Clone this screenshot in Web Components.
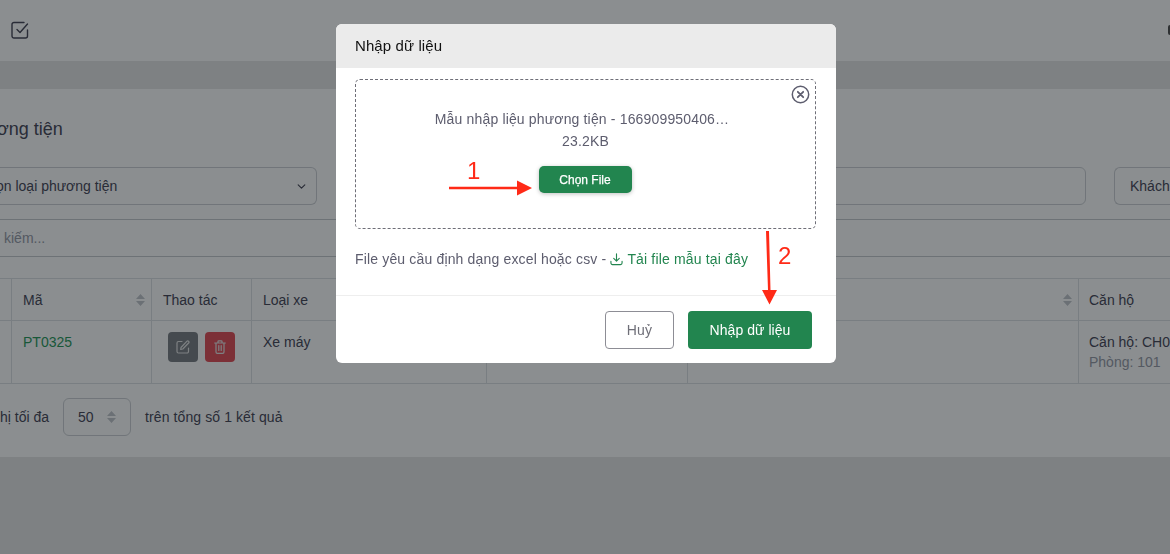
<!DOCTYPE html>
<html lang="vi">
<head>
<meta charset="utf-8">
<title>Nhập dữ liệu</title>
<style>
  html, body { margin: 0; height: 100%; overflow: hidden; }
  body { font-family: "Liberation Sans", Arial, sans-serif; color: #4c4c5c; background: #e8e8e8; }
</style>
</head>
<body>
<vehicle-page></vehicle-page>
<import-modal></import-modal>
<step-arrows></step-arrows>

<script>
(() => {
  const icons = {
    chevron: '<svg width="9" height="5" viewBox="0 0 10 6" fill="none" stroke="currentColor" stroke-width="1.4" stroke-linecap="round" stroke-linejoin="round"><path d="M1 1l4 4 4-4"/></svg>',
    sort: '<svg width="9" height="12" viewBox="0 0 9 12" fill="#c4c8cd"><path d="M4.5 0L9 5H0zM0 7h9l-4.5 5z"/></svg>',
    check: '<svg width="18" height="18" viewBox="0 0 18 18" fill="none" stroke="currentColor" stroke-width="1.4" stroke-linecap="round" stroke-linejoin="round"><path d="M16.5 9v6a2 2 0 0 1-2 2H3a2 2 0 0 1-2-2V3.500a2 2 0 0 1 2-2h10"/><path d="M6 8.500l3 3 7.500-8.500"/></svg>',
    edit: '<svg width="14" height="14" viewBox="0 0 14 14" fill="none" stroke="currentColor" stroke-width="1.2" stroke-linecap="round" stroke-linejoin="round"><path d="M12.500 8v3.500a1.500 1.500 0 0 1-1.500 1.500H2.500A1.500 1.500 0 0 1 1 11.500V3a1.500 1.500 0 0 1 1.500-1.500H6"/><path d="M5 7.500L10.800 1.300a1.200 1.200 0 0 1 1.800 1.700L6.800 9 4.700 9.500z"/></svg>',
    trash: '<svg width="12" height="14" viewBox="0 0 12 14" fill="none" stroke="currentColor" stroke-width="1.2" stroke-linecap="round" stroke-linejoin="round"><path d="M.7 3h10.600M4 3V1.500a.7.7 0 0 1 .7-.7h2.600a.7.7 0 0 1 .7.7V3M2 3v9a1.300 1.300 0 0 0 1.300 1.300h5.400A1.300 1.300 0 0 0 10 12V3M4.800 5.500v5M7.200 5.500v5"/></svg>',
    download: '<svg width="13" height="14" viewBox="0 0 14 14" fill="none" stroke="currentColor" stroke-width="1.2" stroke-linecap="round" stroke-linejoin="round"><path d="M7 1.500v7.500M4 6.300L7 9.300l3-3M1 9.500v1.800A1.700 1.700 0 0 0 2.700 13h8.600a1.700 1.700 0 0 0 1.700-1.700V9.500"/></svg>',
    close: '<svg width="19" height="19" viewBox="0 0 19 19" fill="none" stroke="#5d5d6e" stroke-width="1.500" stroke-linecap="round"><circle cx="9.500" cy="9.500" r="8.200"/><path stroke-width="1.800" d="M6.800 6.800l5.400 5.400M12.200 6.800l-5.400 5.400"/></svg>'
  }

  class FilterSelect extends HTMLElement {
    constructor() {
      super()
      this.attachShadow({ mode: 'open' })
      const w = this.getAttribute('chevron') === 'none' ? '' : icons.chevron
      this.shadowRoot.innerHTML = `
        <style>
          :host { display: flex; align-items: center; justify-content: space-between; box-sizing: border-box;
            height: 38px; border: 1px solid #cfd2d6; border-radius: 6px; font-size: 14px; color: #4c4c5c; white-space: nowrap; overflow: hidden; }
          svg { color: #4c4c5c; margin-right: 10px; flex: none; }
        </style>
        <slot></slot>${w}`
    }
  }
  customElements.define('filter-select', FilterSelect)

  class VehicleTable extends HTMLElement {
    constructor() {
      super()
      this.attachShadow({ mode: 'open' })
      this.shadowRoot.innerHTML = `
        <style>
          :host { display: grid; grid-template-columns: 12px 140px 100px 235px 201px 391px 92px; grid-template-rows: 42px 63px;
            border-top: 1px solid #dee2e6; font-size: 14px; color: #4c4c5c; }
          div { box-sizing: border-box; border-right: 1px solid #dee2e6; border-bottom: 1px solid #dee2e6; padding: 0 11px; }
          .head { display: flex; align-items: center; justify-content: space-between; padding-right: 6px; }
          .cell { padding-top: 13px; line-height: 17px; }
          .edge { padding: 0; }
          .last { border-right: 0; white-space: nowrap; overflow: hidden; padding-left: 10px; }
          .code { color: #2f9c5f; }
          .muted { color: #9a9eaa; margin: 3px 0 0; }
          .acts { display: flex; gap: 7px; padding: 11px 16px 0; }
          .btn { width: 30px; height: 30px; border-radius: 4px; display: flex; align-items: center; justify-content: center; color: #e6e6e6; }
          .grey { background: #7f8388; }
          .red { background: #e4545c; }
        </style>
        <div class="edge"></div>
        <div class="head">Mã ${icons.sort}</div>
        <div class="head">Thao tác</div>
        <div class="head">Loại xe</div>
        <div class="head"></div>
        <div class="head"><span></span>${icons.sort}</div>
        <div class="head last">Căn hộ</div>
        <div class="edge"></div>
        <div class="cell code">PT0325</div>
        <div class="acts"><span class="btn grey">${icons.edit}</span><span class="btn red">${icons.trash}</span></div>
        <div class="cell">Xe máy</div>
        <div class="cell"></div>
        <div class="cell"></div>
        <div class="cell last">Căn hộ: CH0<p class="muted">Phòng: 101</p></div>`
    }
  }
  customElements.define('vehicle-table', VehicleTable)

  class VehiclePage extends HTMLElement {
    constructor() {
      super()
      this.attachShadow({ mode: 'open' })
      this.shadowRoot.innerHTML = `
        <style>
          :host { display: block; height: 554px; overflow: hidden; color: #4c4c5c; }
          header { height: 61px; background: #fff; display: flex; align-items: center; justify-content: space-between; padding-left: 11px; }
          header svg { color: #4c4c5c; margin-top: -1px; }
          header i { width: 2px; height: 10px; border-radius: 2px 0 0 2px; background: #555; margin-top: -1px; }
          .card { margin-top: 28px; height: 368px; background: #fff; overflow: hidden; }
          h1 { margin: 0 0 0 -3px; padding-top: 30px; height: 78px; box-sizing: border-box; font-size: 18px; font-weight: 400; line-height: 20px; }
          .filters { display: grid; grid-template-columns: 318px 740px 1fr; column-gap: 28px; height: 53px; box-sizing: border-box; border-bottom: 1px solid #c9ccd0; }
          .filters filter-select:first-child { border-left: 0; border-radius: 0 6px 6px 0; width: 317px; }
          .filters filter-select:last-child { border-right: 0; border-radius: 6px 0 0 6px; padding-left: 15px; }
          .shift { margin-left: -4px; }
          .search { height: 37px; box-sizing: border-box; border-bottom: 1px solid #c9ccd0; display: flex; align-items: center; padding-left: 4px; font-size: 14px; color: #9a9eaa; }
          .gap { height: 21px; }
          .pager { display: flex; align-items: center; height: 38px; margin-top: 14px; font-size: 14px; white-space: nowrap; }
          .pager > span:first-child { width: 49px; flex: none; }
          .pager > span:last-child { letter-spacing: .1px; }
          .pager filter-select { width: 68px; flex: none; margin: 0 14px; padding-left: 14px; }
          .pager svg { margin-right: 14px; }
          .num { display: flex; align-items: center; justify-content: space-between; width: 100%; }
        </style>
        <header>${icons.check}<i></i></header>
        <section class="card">
          <h1>ơng tiện</h1>
          <div class="filters">
            <filter-select><span class="shift">ọn loại phương tiện</span></filter-select>
            <filter-select></filter-select>
            <filter-select chevron="none">Khách</filter-select>
          </div>
          <div class="search">kiếm...</div>
          <div class="gap"></div>
          <vehicle-table></vehicle-table>
          <div class="pager">
            <span>hị tối đa</span>
            <filter-select chevron="none"><span class="num">50 ${icons.sort}</span></filter-select>
            <span>trên tổng số 1 kết quả</span>
          </div>
        </section>`
    }
  }
  customElements.define('vehicle-page', VehiclePage)

  class ImportModal extends HTMLElement {
    constructor() {
      super()
      this.attachShadow({ mode: 'open' })
      this.shadowRoot.innerHTML = `
        <style>
          :host { position: fixed; inset: 0; background: rgba(0, 6, 10, .455); display: block; }
          .dialog { position: absolute; left: 336px; top: 24px; width: 500px; height: 339px; background: #fff; border-radius: 6px; overflow: hidden;
            display: flex; flex-direction: column; color: #5d5d6e; font-size: 14px; letter-spacing: .16px; }
          .title { height: 44px; box-sizing: border-box; padding: 0 0 2px 19px; flex: none; background: #ebebeb; color: #111; display: flex; align-items: center; font-size: 15px; letter-spacing: .1px; }
          .body { flex: none; height: 228px; padding: 11px 20px 0 19px; box-sizing: border-box; border-bottom: 1px solid #eee; }
          .drop { position: relative; height: 150px; box-sizing: border-box; border: 1px dashed #6f6f78; border-radius: 5px;
            display: flex; flex-direction: column; align-items: center; padding-top: 28px; line-height: 22px; }
          .close { position: absolute; right: 5px; top: 5px; line-height: 0; }
          .fname { margin-right: 7px; }
          .choose { margin-top: 14px; width: 93px; height: 27px; margin-right: 1px; border-radius: 5px; background: #22854f; color: #fff; font-size: 12px; letter-spacing: 0; -webkit-text-stroke: .25px #fff;
            display: flex; align-items: center; justify-content: center; box-shadow: 0 1px 4px rgba(0,0,0,.25); }
          .hint { display: flex; align-items: center; margin-top: 20px; height: 20px; white-space: pre; }
          .hint a { display: flex; align-items: center; gap: 4px; color: #22854f; margin-left: 4px; }
          .foot { flex: 1; display: flex; justify-content: flex-end; align-items: flex-start; gap: 14px; padding: 15px 24px 0 0; }
          .foot span { height: 38px; box-sizing: border-box; display: flex; align-items: center; justify-content: center; border-radius: 4px; }
          .cancel { width: 69px; border: 1px solid #8d8d95; color: #6f6f78; }
          .save { width: 124px; background: #22854f; color: #fff; letter-spacing: .05px; }
        </style>
        <div class="dialog">
          <div class="title">Nhập dữ liệu</div>
          <div class="body">
            <div class="drop">
              <span class="close">${icons.close}</span>
              <span class="fname">Mẫu nhập liệu phương tiện - 166909950406…</span>
              <span>23.2KB</span>
              <span class="choose">Chọn File</span>
            </div>
            <div class="hint">File yêu cầu định dạng excel hoặc csv -<a>${icons.download}Tải file mẫu tại đây</a></div>
          </div>
          <div class="foot"><span class="cancel">Huỷ</span><span class="save">Nhập dữ liệu</span></div>
        </div>`
    }
  }
  customElements.define('import-modal', ImportModal)

  // red callouts drawn on top of the screenshot
  class StepArrows extends HTMLElement {
    constructor() {
      super()
      this.attachShadow({ mode: 'open' })
      this.shadowRoot.innerHTML = `
        <style>
          :host { position: fixed; inset: 0; display: block; pointer-events: none; }
          svg { position: absolute; left: 0; top: 0; }
          b { position: absolute; font: 400 24px/28px "Liberation Sans", Arial, sans-serif; color: #ff2a17; }
        </style>
        <svg width="1170" height="554" fill="#ff2a17" stroke="none">
          <path d="M449 186.700h68v-6.200l15 7.500-15 7.500v-6.200h-68z"/>
          <path d="M766 231h3l1.500 59h6.500l-7.500 14.500L762 290h6z"/>
        </svg>
        <b style="left:467px;top:157px">1</b>
        <b style="left:778px;top:242px">2</b>`
    }
  }
  customElements.define('step-arrows', StepArrows)
})()
</script>
</body>
</html>
